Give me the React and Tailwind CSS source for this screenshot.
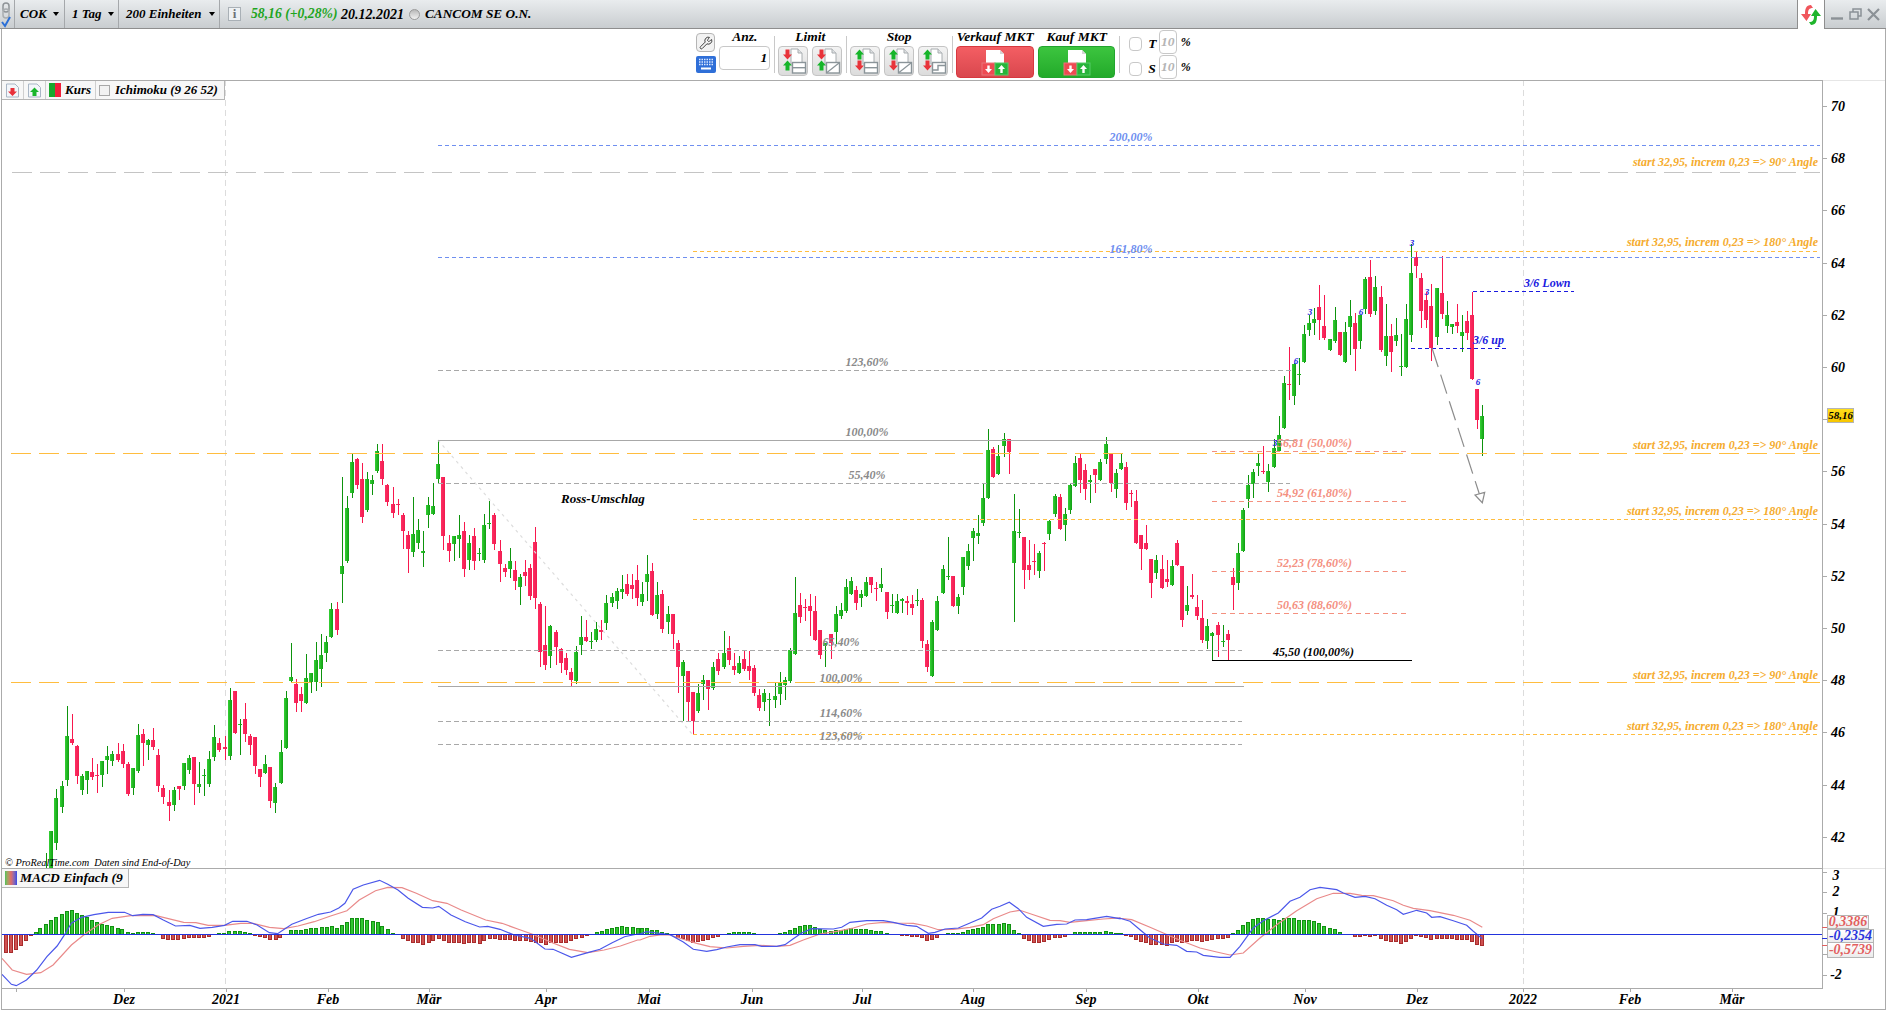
import { Wrench } from 'lucide-react'

// Candles as read off the chart: colour, x, wick top, body top, body bottom, wick bottom.
// Each block is measured at 3x from its own origin.
const BLOCK_A = `g 139 1300 1345 1345 1345
g 153 1233 1233 1345 1345
g 168 1107 1134 1269 1290
g 186 1084 1098 1161 1179
g 201 858 948 1080 1098
r 216 882 957 969 975
r 231 975 978 1068 1092
g 246 1062 1068 1110 1125
g 261 1053 1053 1080 1122
r 276 1014 1056 1071 1080
r 291 1032 1065 1067 1119
g 306 1023 1023 1065 1101
g 321 978 1008 1020 1062
g 336 993 1002 1023 1038
r 354 969 1002 1020 1026
r 369 972 993 1032 1044
r 384 1026 1032 1122 1128
g 399 1044 1044 1104 1125
g 414 912 945 1053 1059
r 429 927 942 969 1038
g 444 957 960 975 1020
r 459 924 960 981 990
r 474 987 1005 1098 1116
r 489 1095 1104 1131 1152
r 507 1110 1146 1158 1203
g 522 1101 1110 1155 1173
r 537 1098 1098 1107 1140
g 552 1029 1029 1098 1110
g 567 1005 1014 1050 1062
r 582 1011 1011 1092 1155
g 597 1026 1092 1101 1119
g 612 1047 1065 1067 1128
g 627 993 1017 1092 1101
g 642 915 951 1011 1023
r 657 954 969 990 996
r 675 948 981 987 1020
g 690 804 840 1008 1020
r 705 813 813 939 942
g 720 897 912 914 1005
r 735 849 897 942 966
r 750 942 948 975 1005
r 765 951 951 1038 1062
r 780 1047 1047 1071 1101
g 795 1005 1032 1059 1062
r 810 1041 1041 1143 1164
g 825 1089 1101 1149 1179
g 843 960 996 1089 1092
g 858 813 834 984 987
g 873 669 771 783 787
r 888 777 792 849 876
r 903 801 822 843 876
g 918 702 774 849 852
g 933 759 759 786 819
g 948 666 720 786 813
g 963 642 705 747 801
g 978 648 666 699 726
g 993 549 567 651 654
r 1011 546 567 630 645
g 1026 171 438 462 549
g 1041 228 264 423 429
g 1056 102 126 219 234
r 1071 114 117 195 207
r 1086 129 177 291 309
g 1101 156 177 270 276
g 1116 165 180 192 225
g 1131 72 93 153 159
r 1146 72 123 177 195
r 1161 192 195 246 258
r 1179 201 252 279 294
r 1194 237 252 254 285
r 1209 279 285 333 387
r 1224 333 345 387 459
g 1239 231 342 396 411
g 1254 297 330 369 387
g 1269 333 393 399 441
g 1284 231 255 285 324
g 1299 189 258 282 285
g 1314 63 132 177 189
r 1329 171 171 348 390
r 1347 345 369 393 426
g 1362 348 348 372 423
g 1377 285 345 357 414
r 1392 306 333 447 471
g 1407 345 369 420 450
r 1422 324 348 423 450
g 1437 384 399 402 423
g 1452 282 315 420 429
g 1467 243 309 312 327
r 1482 279 285 372 390`

const BLOCK_B = `r 0 360 393 432 486
r 15 432 444 456 471
g 30 384 423 447 474
r 45 423 450 483 510
g 60 462 471 501 555
r 75 420 456 468 498
r 90 432 444 528 540
r 105 321 366 534 567
r 120 546 552 696 741
r 135 558 675 735 750
g 150 615 618 708 744
r 168 630 636 681 735
r 183 684 687 729 759
r 198 699 714 750 765
r 213 744 756 780 798
g 228 678 696 783 792
g 243 588 651 675 705
r 258 600 651 663 666
g 273 636 663 665 687
g 288 606 627 660 666
r 303 600 630 636 660
g 318 525 549 609 630
g 336 519 531 549 561
g 351 504 513 543 567
g 366 465 507 516 537
r 381 462 492 522 528
r 396 462 495 507 537
r 411 435 480 534 558
g 426 486 522 546 558
g 441 405 462 486 543
r 456 429 453 585 588
g 471 486 525 582 597
r 486 510 522 627 639
g 504 558 582 606 642
r 519 582 582 642 687
r 534 660 669 741 819
g 549 720 726 768 903
r 564 753 753 846 906
r 579 816 816 903 945
g 594 792 819 873 879
g 609 765 780 792 840
r 624 780 780 807 870
g 639 726 741 804 810
r 654 699 717 753 765
g 672 633 699 741 747
r 687 648 684 720 735
r 702 699 738 750 765
g 717 708 729 759 762
r 732 690 717 747 753
r 747 693 738 753 780
r 762 735 744 819 828
r 777 807 825 864 873
g 792 807 819 846 873
g 807 819 837 839 918
g 825 789 828 840 864
g 840 756 786 822 855
g 855 771 780 795 840
g 870 684 690 783 789
g 885 471 579 702 705
r 900 519 555 591 609
r 915 537 561 564 603
r 930 522 558 573 648
r 945 528 573 660 663
r 960 630 630 705 717
g 975 669 669 678 741
r 993 642 642 669 717
g 1008 558 582 636 672
g 1023 549 570 588 597
g 1038 477 501 573 579
g 1053 471 483 522 525
r 1068 498 510 549 570
g 1083 510 522 534 561
g 1098 471 486 528 531
r 1113 471 471 495 519
r 1128 486 504 507 543
g 1143 444 492 504 516
r 1161 516 516 576 597
g 1176 522 555 557 579
g 1191 522 543 579 582
g 1206 534 537 543 579
r 1221 528 543 549 585
r 1236 525 552 564 585
g 1251 507 540 542 558
r 1266 534 540 663 684
r 1281 660 672 741 756
g 1296 600 606 768 771
g 1311 528 543 630 633
g 1329 435 447 519 522
g 1344 351 468 471 480
r 1359 468 468 558 561
g 1374 522 531 558 582
g 1389 411 411 501 525
g 1404 372 393 438 450
g 1419 324 333 354 423
g 1434 285 339 348 372
g 1449 192 234 309 318
g 1464 27 90 234 237
r 1479 81 87 171 174
g 1494 75 108 162 165`

const BLOCK_C = `g 12 39 57 78 111
r 27 57 57 96 162
g 42 222 333 429 606
g 57 267 336 339 354
r 72 351 351 450 507
r 87 360 435 450 480
r 102 372 423 426 465
g 117 393 399 453 474
r 132 366 369 372 453
g 147 300 303 342 360
g 165 222 228 282 291
r 180 222 231 327 330
g 195 264 282 315 363
g 210 189 195 270 282
g 225 108 129 198 201
r 240 102 114 180 219
r 255 132 150 207 240
g 270 165 180 186 249
r 285 147 147 165 219
g 300 117 126 180 183
g 318 51 72 117 132
r 333 102 102 189 216
g 348 147 159 207 234
g 363 102 129 147 150
r 378 126 141 249 270
r 393 210 219 221 261
r 408 210 243 369 372
r 423 345 345 387 450
r 438 315 369 387 390
r 453 417 417 489 534
g 468 405 420 459 477
r 486 405 447 504 507
r 501 420 477 486 501
g 516 420 438 495 498
r 531 360 369 435 438
r 546 438 438 600 621
g 561 498 555 573 585
r 576 462 525 531 537
r 591 525 561 588 600
r 606 540 594 660 669
g 621 597 618 663 687
g 636 636 639 648 720
r 654 606 615 645 711
g 669 615 663 665 681
r 684 630 642 660 720
r 699 444 471 495 570
g 714 369 399 489 510
g 729 264 270 393 396
g 744 165 195 237 264`

const BLOCK_D = `g 10 747 756 792 834
g 25 702 729 738 768
r 40 678 754 756 762
g 55 732 753 786 816
g 72 657 684 741 744
g 87 588 645 693 696
g 102 468 489 624 627
r 118 381 492 494 540
g 132 429 432 528 555
g 147 414 462 464 495
g 162 315 342 426 429
g 177 285 309 330 348
g 192 264 297 309 345
r 207 195 261 300 360
r 222 225 318 354 360
g 240 357 357 390 393
g 255 261 300 363 369
r 270 336 336 405 408
g 285 306 336 426 429
g 300 240 288 321 405
r 315 279 309 387 453
g 330 285 285 363 387
g 345 171 177 267 282
r 360 120 171 282 291
g 375 168 201 273 285
r 393 198 231 390 396
g 408 252 348 408 438
r 423 312 348 396 456
g 438 294 345 363 378
g 453 342 438 440 468
g 468 252 297 441 444
g 483 72 159 345 366
r 498 96 111 138 174
r 513 159 174 273 324
r 528 216 240 300 324
r 543 192 258 384 423
g 561 204 204 351 375
r 576 108 219 282 297
g 591 243 285 318 339
g 606 312 312 321 342
r 621 252 306 318 339
g 636 285 336 348 396
r 651 273 303 339 360
r 666 216 285 477 480
r 681 507 507 600 627
g 696 555 588 657 708`

function parseBlock(text, offX, offY) {
  return text.split('\n').map(line => {
    const [c, x, wt, bt, bb, wb] = line.trim().split(' ')
    return {
      up: c === 'g',
      x: Math.round(+x / 3 + offX),
      wickTop: +wt / 3 + offY,
      bodyTop: +bt / 3 + offY,
      bodyBot: +bb / 3 + offY,
      wickBot: +wb / 3 + offY,
    }
  })
}

const CANDLES = [
  ...parseBlock(BLOCK_A, 0, 420),
  ...parseBlock(BLOCK_B, 500, 420),
  ...parseBlock(BLOCK_C, 1000, 420),
  ...parseBlock(BLOCK_D, 1250, 220),
]

// MACD histogram: x, height (positive is up), at 3x
const HIST_A = [[15,-55],[27,-55],[39,-45],[51,-32],[63,-18],[75,-2],[87,7],[99,17],[113,31],[125,42],[138,50],[151,60],[163,70],[176,72],[188,62],[200,57],[213,50],[225,43],[238,37],[250,30],[262,27],[275,24],[288,18],[300,14],[313,7],[325,4],[338,6],[350,6],[362,6],[375,3],[387,-1],[400,-13],[412,-15],[425,-15],[437,-15],[450,-13],[462,-10],[475,-10],[487,-10],[500,-10],[512,-6],[537,3],[550,4],[562,9],[575,9],[587,9],[600,6],[612,3],[625,-3],[637,-6],[650,-9],[662,-15],[675,-15],[687,-9],[713,13],[725,13],[738,13],[750,15],[763,18],[775,19],[788,22],[800,22],[813,24],[825,18],[838,26],[850,35],[863,48],[875,49],[888,47],[900,43],[913,40],[925,37],[937,25],[950,15],[962,3],[975,-1],[987,-12],[1000,-19],[1012,-24],[1025,-24],[1037,-30],[1050,-24],[1062,-19],[1075,-12],[1087,-18],[1100,-24],[1112,-24],[1125,-24],[1137,-27],[1150,-24],[1162,-24],[1175,-27],[1187,-18],[1200,-13],[1212,-12],[1225,-16],[1237,-16],[1250,-16],[1262,-18],[1275,-18],[1288,-18],[1300,-22],[1312,-24],[1325,-24],[1337,-30],[1350,-24],[1362,-24],[1375,-24],[1387,-24],[1400,-18],[1412,-13],[1425,-9],[1437,-3],[1462,6],[1475,9],[1487,15],[1500,19],[1512,21],[1525,24],[1537,22],[1550,21],[1562,19]]
const HIST_B = [[65,18],[80,18],[95,12],[110,12],[125,6],[142,3],[173,-9],[188,-12],[203,-18],[219,-24],[234,-21],[249,-18],[264,-15],[279,-9],[294,-6],[326,3],[341,6],[356,6],[371,6],[386,6],[401,3],[479,3],[495,6],[510,12],[525,18],[540,24],[555,27],[570,27],[585,21],[600,15],[615,12],[632,9],[647,12],[662,12],[677,15],[692,18],[707,15],[722,15],[737,15],[752,12],[767,9],[782,9],[800,3],[845,-3],[860,-3],[875,-6],[890,-6],[905,-9],[920,-18],[935,-15],[950,-9],[983,3],[998,3],[1013,3],[1028,6],[1043,12],[1058,15],[1073,18],[1088,21],[1103,30],[1118,30],[1136,30],[1151,33],[1166,30],[1181,12],[1196,3],[1211,-12],[1226,-18],[1241,-24],[1256,-24],[1271,-21],[1286,-15],[1304,-9],[1319,-9],[1334,-6],[1364,6],[1379,6],[1394,6],[1409,6],[1424,6],[1439,6],[1457,9],[1472,6],[1487,3],[1497,3]]
const HIST_C = [[3,3],[18,-3],[33,-6],[48,-15],[63,-21],[78,-24],[93,-30],[108,-30],[126,-30],[141,-33],[156,-24],[171,-21],[186,-24],[201,-21],[216,-18],[231,-18],[246,-21],[261,-18],[276,-15],[294,-12],[309,-12],[324,-9],[338,3],[354,12],[369,27],[384,36],[399,45],[414,48],[429,48],[444,45],[462,45],[477,42],[492,48],[507,48],[522,48],[537,42],[552,42],[567,42],[582,39],[597,33],[612,24],[630,18],[645,15],[660,6],[705,-6],[720,-6],[735,-3],[750,-6],[765,-3],[783,-12],[798,-18],[813,-21],[828,-21],[843,-27],[858,-21],[873,-12],[888,-3],[903,-6],[918,-9],[933,-15],[951,-12],[966,-12],[981,-12],[996,-12],[1011,-15],[1026,-15],[1041,-15],[1056,-21],[1071,-30],[1086,-33]]

const HIST = [
  ...HIST_A.map(([x, h]) => [Math.round(x / 2.45), h / 3]),
  ...HIST_B.map(([x, h]) => [Math.round(x / 3 + 620), h / 3]),
  ...HIST_C.map(([x, h]) => [Math.round(x / 3 + 1120), h / 3]),
]

const BLUE_A = [[5,403],[28,433],[40,437],[65,420],[90,390],[115,350],[140,318],[155,290],[175,250],[200,232],[230,224],[265,217],[305,217],[325,227],[350,223],[375,224],[400,240],[430,258],[465,256],[490,265],[520,262],[550,256],[570,244],[605,244],[630,255],[660,278],[680,281],[715,253],[750,236],[780,223],[810,216],[830,204],[845,190],[865,148],[890,135],[930,121],[950,133],[975,150],[1000,175],[1035,202],[1060,204],[1075,199],[1105,225],[1140,245],[1175,261],[1195,259],[1225,268],[1260,285],[1300,295],[1335,327],[1355,328],[1400,352],[1440,338],[1470,328],[1500,308],[1530,290],[1562,282]]
const BLUE_B = [[60,198],[80,191],[110,195],[150,200],[190,222],[220,244],[260,250],[290,245],[320,237],[360,230],[405,230],[425,235],[470,235],[495,230],[520,212],[545,195],[575,182],[640,183],[665,178],[690,163],[740,158],[790,158],[820,163],[860,172],[890,175],[925,196],[945,193],[975,183],[1015,180],[1050,165],[1085,150],[1115,124],[1140,115],[1168,103],[1195,122],[1220,148],[1270,175],[1310,169],[1340,168],[1365,156],[1400,155],[1460,145],[1500,152]]
const BLUE_C = [[0,151],[30,160],[60,185],[90,210],[130,228],[170,232],[200,250],[230,252],[250,262],[300,268],[330,268],[360,235],[400,180],[430,158],[475,135],[510,100],[540,88],[570,65],[600,58],[650,65],[670,75],[705,88],[735,85],[765,92],[800,112],[830,125],[850,139],[890,127],[920,135],[935,148],[960,146],[1000,158],[1040,172],[1060,190],[1087,212]]
const RED_A = [[5,355],[30,390],[65,403],[100,398],[130,375],[175,315],[205,285],[240,255],[275,235],[320,227],[380,226],[410,235],[450,247],[480,248],[510,256],[550,256],[590,250],[620,250],[660,262],[695,266],[730,258],[770,245],[810,228],[850,212],[880,180],[920,152],[950,142],[985,143],[1020,160],[1060,182],[1095,190],[1130,210],[1190,240],[1230,250],[1270,268],[1310,285],[1350,307],[1395,328],[1440,338],[1480,330],[1520,318],[1562,300]]
const RED_B = [[60,216],[90,205],[120,201],[150,201],[190,214],[230,226],[270,236],[320,240],[370,235],[420,232],[470,235],[510,232],[550,216],[600,198],[650,190],[700,180],[740,168],[790,163],[830,165],[880,166],[920,174],[955,185],[1000,184],[1050,178],[1090,170],[1120,152],[1170,132],[1200,127],[1240,140],[1290,157],[1320,158],[1350,163],[1400,158],[1450,153],[1500,150]]
const RED_C = [[0,151],[35,155],[90,178],[130,195],[180,217],[240,240],[290,252],[330,261],[370,255],[420,210],[470,170],[530,128],[590,92],[640,76],[690,76],[725,82],[760,83],[820,98],[850,112],[880,121],[930,128],[1000,142],[1050,157],[1087,178]]

const toPoints = (a, b, c) => [
  ...a.map(([x, y]) => `${(x / 2.45).toFixed(1)},${(840 + y / 3).toFixed(1)}`),
  ...b.map(([x, y]) => `${(620 + x / 3).toFixed(1)},${(868 + y / 3).toFixed(1)}`),
  ...c.map(([x, y]) => `${(1120 + x / 3).toFixed(1)},${(868 + y / 3).toFixed(1)}`),
].join(' ')

const ORANGE = '#ffbd3f'
const BLUE_DASH = '#6f8ff0'
const GRAY = '#a8a8a8'
const SALMON = '#f4907f'

// [y, x1, x2, colour, dash]
const H_LINES = [
  [144.5, 438, 1820, BLUE_DASH, '4 3'],
  [172, 12, 1820, '#c4c4c4', '20 8'],
  [251, 693, 1820, ORANGE, '4 3'],
  [257, 438, 1820, BLUE_DASH, '4 3'],
  [370, 438, 1293, GRAY, '5 3'],
  [440, 438, 1296, GRAY, null],
  [453, 11, 1820, ORANGE, '20 8'],
  [483, 438, 1290, GRAY, '5 3'],
  [519, 693, 1820, ORANGE, '4 3'],
  [650, 438, 1242, GRAY, '5 3'],
  [682, 11, 1820, ORANGE, '20 8'],
  [686, 438, 1244, GRAY, null],
  [721, 438, 1242, GRAY, '5 3'],
  [734, 693, 1820, ORANGE, '4 3'],
  [744, 438, 1242, GRAY, '5 3'],
  [451, 1212, 1408, SALMON, '5 4'],
  [501, 1212, 1408, SALMON, '5 4'],
  [571, 1212, 1408, SALMON, '5 4'],
  [613, 1212, 1408, SALMON, '5 4'],
  [660, 1212, 1412, '#000000', null],
  [291, 1473, 1574, '#1a1ae0', '4 3'],
  [348, 1411, 1508, '#1a1ae0', '4 3'],
]

// [x, baseline, text, colour, anchor]
const LABELS = [
  [1131, 141, '200,00%', BLUE_DASH, 'middle'],
  [1131, 253, '161,80%', BLUE_DASH, 'middle'],
  [867, 366, '123,60%', '#8a8a8a', 'middle'],
  [867, 436, '100,00%', '#8a8a8a', 'middle'],
  [867, 479, '55,40%', '#8a8a8a', 'middle'],
  [841, 646, '65,40%', '#8a8a8a', 'middle'],
  [841, 682, '100,00%', '#8a8a8a', 'middle'],
  [841, 717, '114,60%', '#8a8a8a', 'middle'],
  [841, 740, '123,60%', '#8a8a8a', 'middle'],
  [1277, 447, '56,81 (50,00%)', SALMON, 'start'],
  [1277, 497, '54,92 (61,80%)', SALMON, 'start'],
  [1277, 567, '52,23 (78,60%)', SALMON, 'start'],
  [1277, 609, '50,63 (88,60%)', SALMON, 'start'],
  [1273, 656, '45,50 (100,00%)', '#000000', 'start'],
  [1818, 166, 'start 32,95, increm 0,23 => 90° Angle', '#f5ac2e', 'end'],
  [1818, 246, 'start 32,95, increm 0,23 => 180° Angle', '#f5ac2e', 'end'],
  [1818, 449, 'start 32,95, increm 0,23 => 90° Angle', '#f5ac2e', 'end'],
  [1818, 515, 'start 32,95, increm 0,23 => 180° Angle', '#f5ac2e', 'end'],
  [1818, 679, 'start 32,95, increm 0,23 => 90° Angle', '#f5ac2e', 'end'],
  [1818, 730, 'start 32,95, increm 0,23 => 180° Angle', '#f5ac2e', 'end'],
  [1524, 287, '3/6 Lown', '#1a1ae0', 'start'],
  [1473, 344, '3/6 up', '#1a1ae0', 'start'],
]

const MARKERS = [
  [1412, 246, '3'], [1310, 315, '3'], [1296, 364, '6'], [1361, 315, '6'],
  [1427, 295, '3'], [1478, 385, '6'], [1275, 446, '3'],
]

const PRICE_TICKS = [70, 68, 66, 64, 62, 60, 58, 56, 54, 52, 50, 48, 46, 44, 42]
const MONTHS = [
  [16, ''], [124, 'Dez'], [226, '2021'], [328, 'Feb'], [429, 'Mär'], [546, 'Apr'], [649, 'Mai'],
  [752, 'Jun'], [862, 'Jul'], [973, 'Aug'], [1086, 'Sep'], [1198, 'Okt'], [1305, 'Nov'],
  [1417, 'Dez'], [1523, '2022'], [1630, 'Feb'], [1732, 'Mär'],
]
const MACD_TICKS = [[872, 880, '3'], [892, 896, '2'], [913, 917, '1'], [954, null, ''], [975, 979, '-2']]

function Caret() {
  return <span className="w-0 h-0 border-x-[3.5px] border-x-transparent border-t-[4px] border-t-black" />
}

function ChainCheck() {
  return (
    <svg width="14" height="27" viewBox="0 0 14 27">
      <rect x="3" y="2" width="6" height="9" rx="3" fill="none" stroke="#8f9498" strokeWidth="1.5" />
      <rect x="3" y="8" width="6" height="9" rx="3" fill="none" stroke="#a9adb0" strokeWidth="1.5" />
      <path d="M2 21 L5 25 L10 16" fill="none" stroke="#2b6fd6" strokeWidth="2" />
    </svg>
  )
}

function SyncIcon() {
  return (
    <svg width="24" height="24" viewBox="0 0 24 24">
      <path d="M12 2 C7 2 6 6 6 11 L2 11 L7.5 18 L12 11 L9 11 C9 7 10 5 14 5 Z" fill="#f0565c" />
      <path d="M12 22 C17 22 18 18 18 13 L22 13 L16.5 6 L12 13 L15 13 C15 17 14 19 10 19 Z" fill="#1fb52c" />
    </svg>
  )
}

function DocArrow({ down }) {
  return (
    <svg width="15" height="15" viewBox="0 0 15 15">
      <path d="M1.5 1 H10 L13.5 4.5 V14 H1.5 Z" fill="#f3f6fa" stroke="#a9b6c5" />
      {down
        ? <path d="M5.5 5 H9.5 V8.5 H12 L7.5 13 L3 8.5 H5.5 Z" fill="#e8303a" />
        : <path d="M5.5 13 H9.5 V9 H12 L7.5 4.5 L3 9 H5.5 Z" fill="#18b52a" />}
    </svg>
  )
}

const ARROW_DOWN = 'M-2 -5 H2 V0 H4.5 L0 5 L-4.5 0 H-2 Z'
const ARROW_UP = 'M-2 5 H2 V0 H4.5 L0 -5 L-4.5 0 H-2 Z'

function OrderIcon({ redFirst, box }) {
  return (
    <svg width="28" height="28" viewBox="1 1 28 28">
      <path d="M13 3 H20 L24 7 V18 H13 Z" fill="#fff" stroke="#a8adb0" />
      <path d="M20 3 V7 H24" fill="#dfe2e4" stroke="#a8adb0" />
      <path d={redFirst ? ARROW_DOWN : ARROW_UP} transform="translate(9.5 8.5)" fill={redFirst ? '#e8333a' : '#16b52a'} />
      <path d={redFirst ? ARROW_UP : ARROW_DOWN} transform="translate(9.5 19.5)" fill={redFirst ? '#16b52a' : '#e8333a'} />
      <rect x="14.5" y="16.5" width="13" height="10.5" fill="#fff" stroke="#8a9499" strokeWidth="1.4" />
      {box === 'split' && <path d="M14.5 21.7 H27.5" stroke="#8a9499" strokeWidth="1.4" />}
      {box === 'slash' && <path d="M15 26.5 L27 17" stroke="#8a9499" strokeWidth="1.2" />}
      {box === 'step' && <path d="M27 19.5 H20 V24 H14.5" fill="none" stroke="#8a9499" strokeWidth="1.4" />}
    </svg>
  )
}

function OrderButton(props) {
  return (
    <div className="w-[30px] h-[30px] flex items-center justify-center rounded-sm border border-[#c4c4c4] bg-linear-to-b from-[#f3f3f3] to-[#dcdcdc]">
      <OrderIcon {...props} />
    </div>
  )
}

function MarketIcon() {
  return (
    <svg width="28" height="27" viewBox="0 0 28 27">
      <path d="M5 1 H19 L23 5 V20 H5 Z" fill="#fff" />
      <path d="M19 1 V5 H23" fill="#d5d5d5" />
      <rect x="1" y="14" width="13" height="12" fill="#ee4a52" stroke="#e9757a" />
      <rect x="14" y="14" width="13" height="12" fill="#27b43a" stroke="#55cc66" />
      <path d="M6.3 16.5 H8.7 V20 H11 L7.5 24 L4 20 H6.3 Z" fill="#fff" />
      <path d="M19.3 24 H21.7 V20 H24 L20.5 16 L17 20 H19.3 Z" fill="#fff" />
    </svg>
  )
}

function Keyboard() {
  return (
    <svg width="20" height="17" viewBox="0 0 20 17">
      <rect width="20" height="17" rx="2" fill="#2f6fd8" />
      <path d="M3 3.5 H17 M3 6 H17 M3 8.5 H17" stroke="#dbe8ff" strokeWidth="1.3" strokeDasharray="1.5 1" />
      <rect x="5" y="11.5" width="10" height="2" fill="#fff" />
    </svg>
  )
}

function Separator() {
  return <div className="w-px h-[37px] mt-[7px] bg-[#c9c9c9] mx-[3.5px]" />
}

function Toolbar() {
  return (
    <div className="h-[51px] flex justify-center text-[13.5px] font-bold italic text-black">
      <div className="flex flex-col gap-[4px] pt-[4px] w-[20px]">
        <div className="w-[19px] h-[19px] flex items-center justify-center rounded-sm border border-[#b5b5b5] bg-[#f2f2f2]">
          <Wrench size={14} strokeWidth={1.6} color="#333333" />
        </div>
        <Keyboard />
      </div>
      <div className="w-[51px] ml-[3px] flex flex-col">
        <div className="h-[17px] flex items-center justify-center">Anz.</div>
        <div className="h-[24px] flex items-center justify-end pr-[2px] rounded-sm border border-[#c8c8c8] bg-white">1</div>
      </div>
      <Separator />
      <div className="w-[64px] flex flex-col">
        <div className="h-[17px] flex items-center justify-center">Limit</div>
        <div className="flex gap-[4px]">
          <OrderButton redFirst box="split" />
          <OrderButton redFirst box="slash" />
        </div>
      </div>
      <Separator />
      <div className="w-[98px] flex flex-col">
        <div className="h-[17px] flex items-center justify-center">Stop</div>
        <div className="flex gap-[4px]">
          <OrderButton box="split" />
          <OrderButton box="slash" />
          <OrderButton box="step" />
        </div>
      </div>
      <Separator />
      <div className="w-[78px] flex flex-col">
        <div className="h-[17px] flex items-center justify-center whitespace-nowrap">Verkauf MKT</div>
        <div className="h-[32px] flex items-end justify-center pb-px rounded-sm border border-[#d8383f] bg-linear-to-b from-[#f45e63] to-[#d9474e]">
          <MarketIcon />
        </div>
      </div>
      <div className="w-[77px] ml-[4px] flex flex-col">
        <div className="h-[17px] flex items-center justify-center whitespace-nowrap">Kauf MKT</div>
        <div className="h-[32px] flex items-end justify-center pb-px rounded-sm border border-[#22a52e] bg-linear-to-b from-[#3cc53f] to-[#22aa2a]">
          <MarketIcon />
        </div>
      </div>
      <Separator />
      <div className="flex flex-col gap-[1px] pt-px ml-[5.5px] w-[62px]">
        {['T', 'S'].map(letter => (
          <div key={letter} className="h-[24px] flex items-center">
            <div className="mt-[4px] w-[14px] h-[14px] rounded-sm border border-[#c8c8c8] bg-white" />
            <span className="mt-[4px] ml-[6px] w-[11px]">{letter}</span>
            <div className="w-[19px] h-[24px] flex items-center justify-center rounded-sm border border-[#c8c8c8] text-[#b5b5b5]">10</div>
            <span className="ml-[4px] text-[12px]">%</span>
          </div>
        ))}
      </div>
    </div>
  )
}

function Candles() {
  return (
    <g shapeRendering="crispEdges">
      {CANDLES.map((c, i) => (
        <g key={i}>
          <rect x={c.x - 0.5} y={c.wickTop} width="1" height={Math.max(c.wickBot - c.wickTop, 1)} fill={c.up ? '#0d930d' : '#f8174d'} />
          {c.bodyBot > c.bodyTop && (
            <rect
              x={c.x - 2}
              y={c.bodyTop}
              width="4"
              height={Math.max(c.bodyBot - c.bodyTop, 1)}
              fill={c.up ? 'url(#bodyGreen)' : 'url(#bodyRed)'}
            />
          )}
        </g>
      ))}
    </g>
  )
}

function PriceChart() {
  return (
    <svg width="1883" height="788" viewBox="2 80 1883 788" className="block" fontFamily="'Liberation Serif', serif" fontWeight="bold" fontStyle="italic">
      <defs>
        <linearGradient id="bodyGreen">
          <stop offset="0" stopColor="#35d035" />
          <stop offset="1" stopColor="#0f9f12" />
        </linearGradient>
        <linearGradient id="bodyRed">
          <stop offset="0" stopColor="#ff2d62" />
          <stop offset="1" stopColor="#ef1c50" />
        </linearGradient>
      </defs>

      <path d="M225.5 80 V868 M1523.5 80 V868" stroke="#dcdcdc" strokeDasharray="6 4" shapeRendering="crispEdges" />
      <Candles />

      <path d="M438 440 L693 735" stroke="#dddddd" strokeWidth="1.2" strokeDasharray="3 4" fill="none" />
      <g shapeRendering="crispEdges">
        {H_LINES.map(([y, x1, x2, color, dash], i) => (
          <line key={i} x1={x1} x2={x2} y1={y + 0.5} y2={y + 0.5} stroke={color} strokeDasharray={dash || undefined} />
        ))}
      </g>

      <line x1="1432" y1="348" x2="1480" y2="496" stroke="#8c8c8c" strokeWidth="1.2" strokeDasharray="20 8" />
      <path d="M1475 495 L1484.7 492.3 L1482.3 502.7 Z" fill="#fff" stroke="#8c8c8c" strokeWidth="1.2" />

      {LABELS.map(([x, y, text, color, anchor], i) => (
        <text key={i} x={x} y={y} fill={color} textAnchor={anchor} fontSize="12">{text}</text>
      ))}
      {MARKERS.map(([x, y, text], i) => (
        <text key={i} x={x} y={y} fill="#1a1ae0" textAnchor="middle" fontSize="9">{text}</text>
      ))}
      <text x="561" y="503" fill="#000" fontSize="13">Ross-Umschlag</text>
      <text x="5" y="866" fill="#000" fontSize="10.3" fontWeight="normal">{'© ProRealTime.com\u00a0\u00a0Daten sind End-of-Day'}</text>

      <g shapeRendering="crispEdges">
        <line x1="2" x2="1822" y1="80.5" y2="80.5" stroke="#ababab" />
        <line x1="1822" x2="1885" y1="80.5" y2="80.5" stroke="#e6e6e6" />
        <line x1="1822.5" x2="1822.5" y1="80" y2="868" stroke="#ababab" />
        {PRICE_TICKS.map((p, i) => {
          const y = Math.round(106 + i * 52.2)
          return <line key={p} x1="1822" x2="1827" y1={y + 0.5} y2={y + 0.5} stroke="#ababab" />
        })}
      </g>
      {/* the 58 sits behind the last-price tag, so it gets no label */}
      {PRICE_TICKS.map((p, i) => p !== 58 && (
        <text key={p} x="1831" y={Math.round(106 + i * 52.2) + 5} fill="#000" fontSize="14">{p}</text>
      ))}
    </svg>
  )
}

function MacdChart() {
  return (
    <svg width="1883" height="141" viewBox="2 868 1883 141" className="block" fontFamily="'Liberation Serif', serif" fontWeight="bold" fontStyle="italic">
      <path d="M225.5 868 V988 M1523.5 868 V988" stroke="#dcdcdc" strokeDasharray="6 4" shapeRendering="crispEdges" />
      <g shapeRendering="crispEdges">
        {HIST.map(([x, h], i) => (
          <rect
            key={i}
            x={x - 1.5}
            y={h > 0 ? 934.5 - h : 934.5}
            width="3"
            height={Math.abs(h)}
            fill={h > 0 ? '#2fc72f' : '#cf5050'}
            stroke={h > 0 ? '#128f12' : '#a82c2c'}
          />
        ))}
      </g>
      <polyline points={toPoints(RED_A, RED_B, RED_C)} fill="none" stroke="#e98a8a" strokeWidth="1.2" />
      <polyline points={toPoints(BLUE_A, BLUE_B, BLUE_C)} fill="none" stroke="#4b57ea" strokeWidth="1.2" />
      <g shapeRendering="crispEdges">
        <line x1="2" x2="1822" y1="934.5" y2="934.5" stroke="#2233dd" />
        <line x1="2" x2="1822" y1="868.5" y2="868.5" stroke="#ababab" />
        <line x1="1822" x2="1885" y1="868.5" y2="868.5" stroke="#e6e6e6" />
        <line x1="2" x2="1823" y1="988.5" y2="988.5" stroke="#ababab" />
        <line x1="1822.5" x2="1822.5" y1="868" y2="988" stroke="#ababab" />
        {MACD_TICKS.map(([y]) => (
          <line key={y} x1="1822" x2="1827" y1={y + 0.5} y2={y + 0.5} stroke="#ababab" />
        ))}
        {MONTHS.map(([x], i) => (
          <line key={i} x1={x + 0.5} x2={x + 0.5} y1="988" y2="992" stroke="#ababab" />
        ))}
        <line x1="1822" x2="1827" y1="927.5" y2="927.5" stroke="#e06060" />
        <line x1="1822" x2="1827" y1="938.5" y2="938.5" stroke="#2233dd" />
        <line x1="1822" x2="1827" y1="945.5" y2="945.5" stroke="#e06060" />
      </g>
      {MACD_TICKS.filter(t => t[2]).map(([, y, text]) => (
        <text key={text} x="1836" y={y} fill="#000" fontSize="14" textAnchor="middle">{text}</text>
      ))}
      {MONTHS.map(([x, text], i) => (
        <text key={i} x={x} y="1004" fill="#000" fontSize="14" textAnchor="middle">{text}</text>
      ))}
    </svg>
  )
}

function ValueTag({ className, children }) {
  return (
    <div className={`absolute h-[14px] flex items-center justify-center border border-[#b5b5b5] bg-linear-to-b from-white to-[#ececec] text-[14px] leading-none ${className}`}>
      {children}
    </div>
  )
}

export default function App() {
  return (
    <div className="w-[1886px] h-[1010px] overflow-hidden bg-white font-['Liberation_Serif',serif]">
      {/* Top bar */}
      <div className="h-[29px] flex text-[13px] font-bold italic text-black">
        <div className="flex-1 flex items-center border-b border-[#8e8e8e] bg-linear-to-b from-[#e9ecee] to-[#c9cdd0]">
          <div className="w-[15px] h-full flex items-center justify-center border-r border-[#a5a8ab]"><ChainCheck /></div>
          <div className="w-[50px] h-full flex items-center justify-between pl-[5px] pr-[5px] border-r border-[#a5a8ab]">COK <Caret /></div>
          <div className="w-[54px] h-full flex items-center justify-between pl-[7px] pr-[4px] border-r border-[#a5a8ab]">1 Tag <Caret /></div>
          <div className="w-[101px] h-full flex items-center justify-between pl-[7px] pr-[4px] border-r border-[#a5a8ab]">200 Einheiten <Caret /></div>
          <div className="ml-[8px] w-[13px] h-[14px] flex items-center justify-center border border-[#a9b0b6] bg-[#eef1f3] text-[#6d7277] not-italic">i</div>
          <span className="ml-[10px] w-[85px] text-[13.7px] text-[#1ea51e] whitespace-nowrap">58,16 (+0,28%)</span>
          <span className="ml-[5px] w-[64px] text-[14px] whitespace-nowrap">20.12.2021</span>
          <span className="ml-[4px] w-[11px] h-[11px] rounded-full border border-[#9a9a9a] bg-linear-to-b from-[#b9b9b9] to-[#f2f2f2]" />
          <span className="ml-[5px] text-[13.3px] whitespace-nowrap">CANCOM SE O.N.</span>
        </div>
        <div className="w-[28px] h-full flex items-center justify-center border-x border-[#8e8e8e] bg-white"><SyncIcon /></div>
        <div className="w-[61px] h-full flex items-center justify-center border-b border-[#8e8e8e] bg-linear-to-b from-[#e9ecee] to-[#c9cdd0]">
          <svg width="50" height="14" viewBox="0 0 50 14" fill="none" stroke="#8b9196" strokeWidth="2">
            <path d="M0 11.5 H12" strokeWidth="2.4" />
            <path d="M19 5 H27 V12 H19 Z M22 5 V2 H30 V9 H27" strokeWidth="1.5" />
            <path d="M37 2 L48 13 M48 2 L37 13" strokeWidth="2.2" />
          </svg>
        </div>
      </div>

      <div className="ml-px border-x border-b border-[#ababab]">
        <Toolbar />

        {/* Price panel */}
        <div className="relative h-[788px]">
          <PriceChart />
          <div className="absolute left-0 top-px h-[19px] w-[223px] flex items-center border-b border-r border-[#b5b5b5] bg-[#f7f7f7] text-[13px] font-bold italic text-black">
            <div className="w-[22px] h-full flex items-center justify-center border-r border-[#cfcfcf]"><DocArrow down /></div>
            <div className="w-[22px] h-full flex items-center justify-center border-r border-[#cfcfcf]"><DocArrow /></div>
            <div className="ml-[3px] w-[12px] h-[14px] bg-linear-to-r from-[#18a82c] from-50% to-[#f0203a] to-50%" />
            <span className="ml-[4px] w-[29px]">Kurs</span>
            <div className="ml-px w-px h-full bg-[#cfcfcf]" />
            <div className="ml-[3px] w-[11px] h-[11px] border border-[#a8a8a8] bg-[#f2f2f2]" />
            <span className="ml-[5px] whitespace-nowrap overflow-hidden">Ichimoku (9 26 52)</span>
          </div>
          <div className="absolute left-[1825px] top-[328px] w-[27px] h-[15px] flex items-center justify-center border border-[#b5b5b5] bg-linear-to-b from-[#ffdf1a] to-[#f7c600] text-[11px] font-bold italic text-black">58,16</div>
        </div>

        {/* MACD panel */}
        <div className="relative h-[141px]">
          <MacdChart />
          <div className="absolute left-0 top-px h-[19px] w-[127px] flex items-center border-b border-r border-[#b5b5b5] bg-[#f7f7f7] text-[13.5px] font-bold italic text-black whitespace-nowrap overflow-hidden">
            <div className="ml-[3px] w-[12px] h-[14px] bg-linear-to-r from-[#43c35a] via-[#e06a6a] to-[#3a46e6]" />
            <span className="ml-[3px]">MACD Einfach (9</span>
          </div>
          <div className="font-bold italic">
            <ValueTag className="left-[1825px] top-[47px] w-[42px] text-[#e25f5f]">0,3386</ValueTag>
            <ValueTag className="left-[1825px] top-[61px] w-[47px] text-[#2a35dd]">-0,2354</ValueTag>
            <ValueTag className="left-[1825px] top-[74px] w-[47px] h-[16px] text-[#e25f5f]">-0,5739</ValueTag>
          </div>
        </div>
      </div>
    </div>
  )
}
